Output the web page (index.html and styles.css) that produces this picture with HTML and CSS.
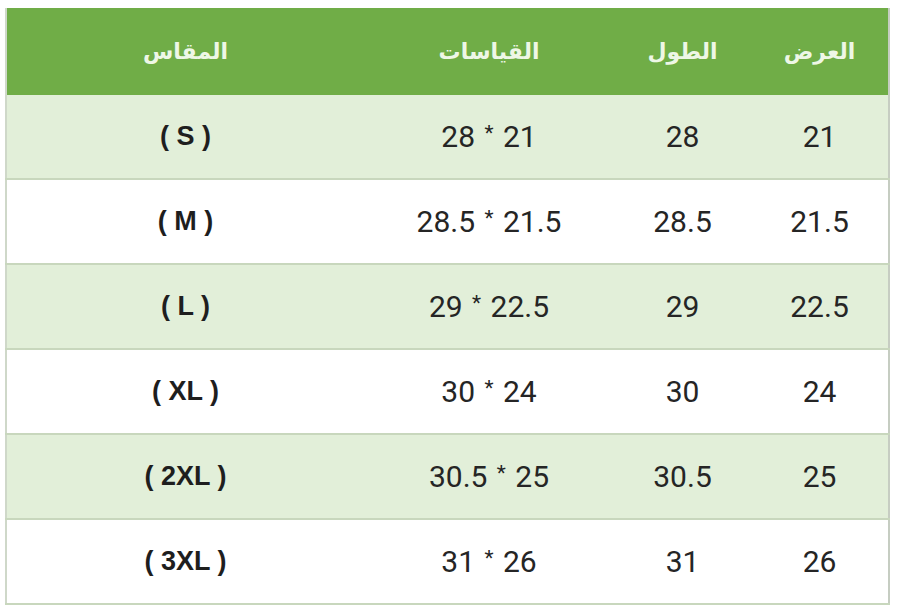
FILE: index.html
```html
<!DOCTYPE html>
<html lang="ar" dir="rtl">
<head>
<meta charset="utf-8">
<link rel="stylesheet" href="styles.css">
</head>
<body>
<table class="sizes">
  <colgroup>
    <col class="c-w">
    <col class="c-l">
    <col class="c-m">
    <col class="c-s">
  </colgroup>
  <thead>
    <tr><th>العرض</th><th>الطول</th><th>القياسات</th><th>المقاس</th></tr>
  </thead>
  <tbody>
    <tr class="alt"><td>21</td><td>28</td><td dir="ltr">28 <span class="x">*</span> 21</td><td class="sz" dir="ltr">( S )</td></tr>
    <tr><td>21.5</td><td>28.5</td><td dir="ltr">28.5 <span class="x">*</span> 21.5</td><td class="sz" dir="ltr">( M )</td></tr>
    <tr class="alt"><td>22.5</td><td>29</td><td dir="ltr">29 <span class="x">*</span> 22.5</td><td class="sz" dir="ltr">( L )</td></tr>
    <tr><td>24</td><td>30</td><td dir="ltr">30 <span class="x">*</span> 24</td><td class="sz" dir="ltr">( XL )</td></tr>
    <tr class="alt"><td>25</td><td>30.5</td><td dir="ltr">30.5 <span class="x">*</span> 25</td><td class="sz" dir="ltr">( 2XL )</td></tr>
    <tr><td>26</td><td>31</td><td dir="ltr">31 <span class="x">*</span> 26</td><td class="sz" dir="ltr">( 3XL )</td></tr>
  </tbody>
</table>
</body>
</html>
```
FILE: styles.css
```css
html, body {
  margin: 0;
  padding: 0;
  background: #ffffff;
}
body {
  padding: 8px 10px 0 7px;
  font-family: Roboto, "Liberation Sans", sans-serif;
}
.sizes {
  width: 883px;
  border-collapse: collapse;
  table-layout: fixed;
  border-left: 2px solid #cfd8c9;
  border-right: 2px solid #c6cdc2;
}
.c-w { width: 138px; }
.c-l { width: 137px; }
.c-m { width: 250px; }
.c-s { width: 358px; }
.sizes th {
  background: #70ad47;
  color: #eef7e6;
  height: 87px;
  padding: 0;
  font-family: "DejaVu Sans", sans-serif;
  font-weight: bold;
  font-size: 22px;
  text-align: center;
  vertical-align: middle;
}
.sizes td {
  height: 83px;
  padding: 0;
  text-align: center;
  vertical-align: middle;
  font-size: 30px;
  color: #252525;
  border-bottom: 2px solid #c8d7bd;
  word-spacing: 2px;
}
.sizes td .x {
  font-size: 21px;
  vertical-align: 7px;
}
.sizes tr.alt td {
  background: #e2efd9;
}
.sizes td.sz {
  font-family: "Liberation Sans", Arial, sans-serif;
  font-weight: bold;
  font-size: 27px;
  color: #1e1e1e;
  word-spacing: 0;
}
```
